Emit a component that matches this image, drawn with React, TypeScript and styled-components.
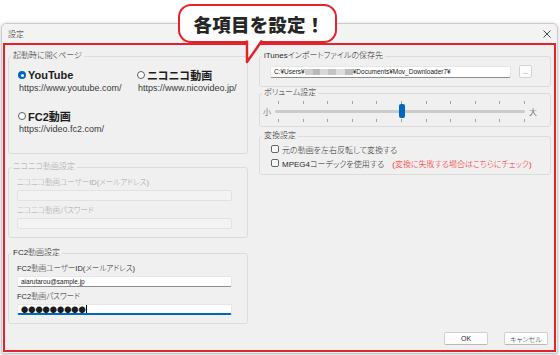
import styled, { createGlobalStyle } from "styled-components";

const UI_FONT = `"Liberation Sans", "Noto Sans CJK JP", sans-serif`;
const RED = "#e3232c";
const BLUE = "#0067c0";

const GlobalStyle = createGlobalStyle`
  html, body { margin: 0; background: #fff; }
  body { font-family: ${UI_FONT}; font-feature-settings: "palt"; color: #2b2b2b; }
  * { box-sizing: border-box; }
`;

const Stage = styled.div`
  position: relative;
  width: 560px;
  height: 355px;
  padding: 23px 2px 0 1px;
  overflow: hidden;
  background: #fff;
`;

const Window = styled.div`
  width: 557px;
  height: 331px;
  display: flex;
  flex-direction: column;
  background: #f0f0f0;
  border: 1px solid #cbcbcb;
  border-radius: 5px 5px 2px 2px;
  box-shadow: 0 1px 4px rgba(0, 0, 0, 0.22);
`;

const TitleBar = styled.div`
  height: 19px;
  flex: none;
  display: flex;
  align-items: center;
  justify-content: space-between;
  padding: 0 6px 0 6px;
  background: #f3f3f3;
  border-radius: 5px 5px 0 0;
  font-size: 8px;
  font-weight: 300;
`;

const Frame = styled.div`
  flex: 1;
  margin: 0 1px 1px;
  border: 2px solid ${RED};
  display: flex;
  flex-direction: column;
`;

const Columns = styled.div`
  display: flex;
  gap: 11px;
  padding: 3px 0 0 3px;
`;

const Column = styled.div<{ $w: number }>`
  width: ${(p) => p.$w}px;
  display: flex;
  flex-direction: column;
`;

const Group = styled.fieldset<{ $h: number; $mt?: number; $off?: boolean }>`
  margin: ${(p) => p.$mt ?? 0}px 0 0;
  padding: 0;
  height: ${(p) => p.$h}px;
  min-width: 0;
  border: 1px solid #dcdcdc;
  border-radius: 3px;
  font-weight: 300;
  color: ${(p) => (p.$off ? "#a8a8a8" : "#2b2b2b")};
`;

const Legend = styled.legend`
  margin-left: 2px;
  padding: 0 2px;
  font-size: 8px;
  line-height: 10px;
`;

const RadioGrid = styled.div`
  display: grid;
  grid-template-columns: 119px auto;
  row-gap: 16px;
  padding: 7px 0 0 9px;
`;

const Option = styled.div`
  display: flex;
  flex-direction: column;
`;

const RadioLine = styled.div`
  height: 14px;
  display: flex;
  align-items: center;
  gap: 2px;
  font-size: 11px;
  font-weight: 600;
  color: #1b1b1b;
`;

const Radio = styled.span<{ $on?: boolean }>`
  width: 8px;
  height: 8px;
  border-radius: 50%;
  flex: none;
  background: ${(p) => (p.$on ? BLUE : "#fff")};
  border: ${(p) => (p.$on ? "none" : "1px solid #5f5f5f")};
  display: flex;
  align-items: center;
  justify-content: center;
  &::after {
    content: "";
    width: 3px;
    height: 3px;
    border-radius: 50%;
    background: ${(p) => (p.$on ? "#fff" : "transparent")};
  }
`;

const Url = styled.div`
  margin-top: 1px;
  padding-left: 1px;
  font-size: 9px;
  line-height: 10px;
  color: #3a3a3a;
`;

const FieldStack = styled.div`
  display: flex;
  flex-direction: column;
  padding: 5px 0 0 8px;
`;

const FieldLabel = styled.div<{ $first?: boolean }>`
  font-size: 7.5px;
  line-height: 11px;
  margin-top: ${(p) => (p.$first ? 0 : 4)}px;
`;

const TextBox = styled.div<{ $off?: boolean; $focus?: boolean }>`
  width: 215px;
  height: 11px;
  margin-top: 2px;
  padding-left: 3px;
  display: flex;
  align-items: center;
  font-size: 6.5px;
  color: #1b1b1b;
  background: ${(p) => (p.$off ? "#f3f3f3" : "#fff")};
  border: 1px solid ${(p) => (p.$off ? "#e2e2e2" : "#e6e6e6")};
  border-bottom: ${(p) =>
    p.$focus ? `2px solid ${BLUE}` : `1px solid ${p.$off ? "#e2e2e2" : "#8c8c8c"}`};
  border-radius: 2px;
`;

const Dots = styled.span`
  font-family: "Noto Sans CJK JP", sans-serif;
  font-size: 7.2px;
  font-feature-settings: normal;
`;

const Caret = styled.span`
  width: 1px;
  height: 8px;
  background: #000;
`;

const PathRow = styled.div`
  display: flex;
  align-items: center;
  gap: 8px;
  padding: 4px 0 0 10px;
`;

const PathBox = styled(TextBox)`
  width: 241px;
  height: 12px;
  margin-top: 0;
`;

const Mosaic = styled.span`
  display: inline-block;
  width: 48px;
  height: 6px;
  background: linear-gradient(
    90deg,
    #cfcfcf 0 8px,
    #b9b9b9 8px 15px,
    #d8d8d8 15px 23px,
    #c4c4c4 23px 31px,
    #dedede 31px 40px,
    #bcbcbc 40px 48px
  );
  filter: blur(0.6px);
`;

const SmallButton = styled.div`
  width: 13px;
  height: 13px;
  display: flex;
  align-items: flex-end;
  justify-content: center;
  font-size: 6px;
  line-height: 9px;
  background: #fdfdfd;
  border: 1px solid #d3d3d3;
  border-radius: 2px;
`;

const SliderRow = styled.div`
  display: flex;
  align-items: center;
  gap: 4px;
  padding: 3px 0 0 3px;
  font-size: 8px;
`;

const TrackArea = styled.div`
  position: relative;
  width: 250px;
  height: 21px;
  display: flex;
  flex-direction: column;
  justify-content: space-between;
`;

const TickRow = styled.div`
  height: 3px;
  display: flex;
  justify-content: space-between;
  padding-left: 3px;
`;

const Tick = styled.span`
  width: 1px;
  height: 3px;
  background: #a3a3a3;
`;

const Track = styled.div`
  height: 3px;
  background: #cbcbcb;
  border-radius: 2px;
`;

const Thumb = styled.div`
  position: absolute;
  top: 3px;
  width: 6px;
  height: 14px;
  background: ${BLUE};
  border-radius: 2px;
`;

const CheckStack = styled.div`
  display: flex;
  flex-direction: column;
  gap: 2px;
  padding: 2px 0 0 11px;
`;

const CheckRow = styled.div`
  height: 12px;
  display: flex;
  align-items: center;
  gap: 3px;
  font-size: 8px;
`;

const CheckBox = styled.span`
  width: 8px;
  height: 8px;
  flex: none;
  background: #fff;
  border: 1px solid #646464;
  border-radius: 2px;
`;

const Note = styled.span`
  margin-left: 5px;
  color: #ff1d1d;
`;

const ButtonRow = styled.div`
  margin-top: auto;
  display: flex;
  justify-content: flex-end;
  gap: 16px;
  padding: 0 6px 5px 0;
  font-weight: 300;
`;

const DialogButton = styled.div`
  width: 44px;
  height: 13px;
  display: flex;
  align-items: center;
  justify-content: center;
  font-size: 7px;
  background: #fdfdfd;
  border: 1px solid #d0d0d0;
  border-bottom-color: #b8b8b8;
  border-radius: 2px;
`;

const Bubble = styled.div`
  position: absolute;
  left: 178px;
  top: 4px;
  width: 159px;
  height: 39px;
  display: flex;
  align-items: center;
  justify-content: center;
  padding-left: 3px;
  background: #fff;
  border: 2.5px solid ${RED};
  border-radius: 13px;
  font-family: "Noto Sans CJK JP", sans-serif;
  font-feature-settings: normal;
  font-size: 18.5px;
  font-weight: 900;
  letter-spacing: 0.2px;
  color: #262626;
`;

const Tail = styled.svg`
  position: absolute;
  left: 244px;
  top: 39px;
`;

const ticks = Array.from({ length: 11 }, (_, i) => i);
const volume = 0.5;

export default function App() {
  return (
    <>
      <GlobalStyle />
      <Stage>
        <Window>
          <TitleBar>
            <span>設定</span>
            <svg width="8" height="8" viewBox="0 0 8 8">
              <path d="M0.5 0.5 L7.5 7.5 M7.5 0.5 L0.5 7.5" stroke="#333" strokeWidth="0.9" />
            </svg>
          </TitleBar>
          <Frame>
            <Columns>
              <Column $w={240}>
                <Group $h={103} $mt={3}>
                  <Legend>起動時に開くページ</Legend>
                  <RadioGrid>
                    <Option>
                      <RadioLine>
                        <Radio $on />
                        YouTube
                      </RadioLine>
                      <Url>https://www.youtube.com/</Url>
                    </Option>
                    <Option>
                      <RadioLine>
                        <Radio />
                        ニコニコ動画
                      </RadioLine>
                      <Url>https://www.nicovideo.jp/</Url>
                    </Option>
                    <Option>
                      <RadioLine>
                        <Radio />
                        FC2動画
                      </RadioLine>
                      <Url>https://video.fc2.com/</Url>
                    </Option>
                  </RadioGrid>
                </Group>
                <Group $h={76} $mt={8} $off>
                  <Legend>ニコニコ動画設定</Legend>
                  <FieldStack>
                    <FieldLabel $first>ニコニコ動画ユーザーID(メールアドレス)</FieldLabel>
                    <TextBox $off />
                    <FieldLabel>ニコニコ動画パスワード</FieldLabel>
                    <TextBox $off />
                  </FieldStack>
                </Group>
                <Group $h={76} $mt={10}>
                  <Legend>FC2動画設定</Legend>
                  <FieldStack>
                    <FieldLabel $first>FC2動画ユーザーID(メールアドレス)</FieldLabel>
                    <TextBox>aiarutarou@sample.jp</TextBox>
                    <FieldLabel>FC2動画パスワード</FieldLabel>
                    <TextBox $focus>
                      <Dots>●●●●●●●●●</Dots>
                      <Caret />
                    </TextBox>
                  </FieldStack>
                </Group>
              </Column>
              <Column $w={292}>
                <Group $h={36} $mt={3}>
                  <Legend>iTunesインポートファイルの保存先</Legend>
                  <PathRow>
                    <PathBox>
                      C:¥Users¥<Mosaic />¥Documents¥Mov_Downloader7¥
                    </PathBox>
                    <SmallButton>...</SmallButton>
                  </PathRow>
                </Group>
                <Group $h={39} $mt={1}>
                  <Legend>ボリューム設定</Legend>
                  <SliderRow>
                    <span>小</span>
                    <TrackArea>
                      <TickRow>
                        {ticks.map((t) => (
                          <Tick key={t} />
                        ))}
                      </TickRow>
                      <Track />
                      <TickRow>
                        {ticks.map((t) => (
                          <Tick key={t} />
                        ))}
                      </TickRow>
                      <Thumb style={{ left: 3 + volume * 247 - 3 }} />
                    </TrackArea>
                    <span>大</span>
                  </SliderRow>
                </Group>
                <Group $h={44} $mt={4}>
                  <Legend>変換設定</Legend>
                  <CheckStack>
                    <CheckRow>
                      <CheckBox />
                      元の動画を左右反転して変換する
                    </CheckRow>
                    <CheckRow>
                      <CheckBox />
                      MPEG4コーデックを使用する
                      <Note>(変換に失敗する場合はこちらにチェック)</Note>
                    </CheckRow>
                  </CheckStack>
                </Group>
              </Column>
            </Columns>
            <ButtonRow>
              <DialogButton>OK</DialogButton>
              <DialogButton>キャンセル</DialogButton>
            </ButtonRow>
          </Frame>
        </Window>
        <Bubble>各項目を設定！</Bubble>
        <Tail width="22" height="26" viewBox="0 0 22 26">
          <path d="M3 1.5 L3 23 L18 1.5" fill="#fff" stroke={RED} strokeWidth="2.5" strokeLinejoin="round" />
        </Tail>
      </Stage>
    </>
  );
}
